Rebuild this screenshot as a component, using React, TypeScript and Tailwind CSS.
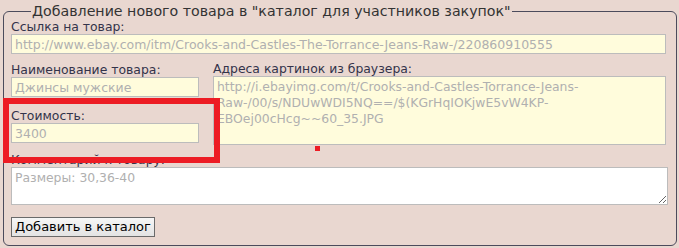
import React from "react";

const imageUrls =
  "http://i.ebayimg.com/t/Crooks-and-Castles-Torrance-Jeans-Raw-/00/s/NDUwWDI5NQ==/$(KGrHqIOKjwE5vW4KP-EBOej00cHcg~~60_35.JPG";

export default function App() {
  return (
    <div className="relative w-[679px] h-[248px] bg-[#e9d7d0] overflow-hidden font-['DejaVu_Sans',Verdana,sans-serif] text-[12.4px] text-[#33334a]">
      <div className="pl-[3px] pt-[3px]">
        <fieldset className="w-[674px] h-[243px] border border-[#4b4b5c] rounded-[6px] pl-[7px] pr-[7px]">
          <legend className="ml-[20px] px-[1px] text-[14.2px] leading-[16px] text-[#333]">
            Добавление нового товара в "каталог для участников закупок"
          </legend>

          {/* Ссылка */}
          <div className="leading-[15px]">Ссылка на товар:</div>
          <input
            readOnly
            defaultValue="http://www.ebay.com/itm/Crooks-and-Castles-The-Torrance-Jeans-Raw-/220860910555"
            className="block w-[655px] h-[20px] border border-[#bcbcbc] bg-[#fffcdc] px-[3px] text-[12.5px] text-[#b0b0b0] outline-none"
          />

          {/* Наименование / Стоимость / Картинки */}
          <div className="flex gap-[14px] mt-[8px]">
            <div className="flex flex-col w-[188px]">
              <div className="leading-[15px]">Наименование товара:</div>
              <input
                readOnly
                defaultValue="Джинсы мужские"
                className="block w-[188px] h-[20px] border border-[#bcbcbc] bg-[#fffcdc] px-[3px] text-[12.5px] text-[#b0b0b0] outline-none"
              />
              <div className="leading-[15px] mt-[11px]">Стоимость:</div>
              <input
                readOnly
                defaultValue="3400"
                className="block w-[188px] h-[20px] border border-[#bcbcbc] bg-[#fffcdc] px-[3px] text-[12.5px] text-[#b0b0b0] outline-none"
              />
            </div>
            <div className="flex flex-col">
              <div className="leading-[14px]">Адреса картинок из браузера:</div>
              <textarea
                readOnly
                defaultValue={imageUrls}
                className="block w-[453px] h-[69px] border border-[#bcbcbc] bg-[#fffcdc] px-[3px] py-[2px] text-[12.4px] leading-[16px] text-[#b0b0b0] outline-none resize-none"
              />
            </div>
          </div>

          {/* Комментарий */}
          <div className="leading-[14px] mt-[8px]">Комментарий к товару:</div>
          <textarea
            readOnly
            defaultValue="Размеры: 30,36-40"
            className="block w-[657px] h-[38px] border border-[#bcbcbc] bg-white px-[3px] py-[2px] text-[12.4px] leading-[15.5px] text-[#b0b0b0] outline-none"
          />

          <button className="block mt-[12px] h-[20px] px-[3px] border border-[#6a6a6a] bg-gradient-to-b from-[#f6f6f6] to-[#e3e3e3] text-[13px] leading-[16px] text-black">
            Добавить в каталог
          </button>
        </fieldset>
      </div>

      {/* annotation overlays */}
      <div className="absolute left-[3px] top-[98px] w-[217px] h-[65px] border-[6px] border-[#ed1c24]" />
      <div className="absolute left-[315px] top-[146px] w-[5px] h-[5px] bg-[#ed1c24]" />
    </div>
  );
}
